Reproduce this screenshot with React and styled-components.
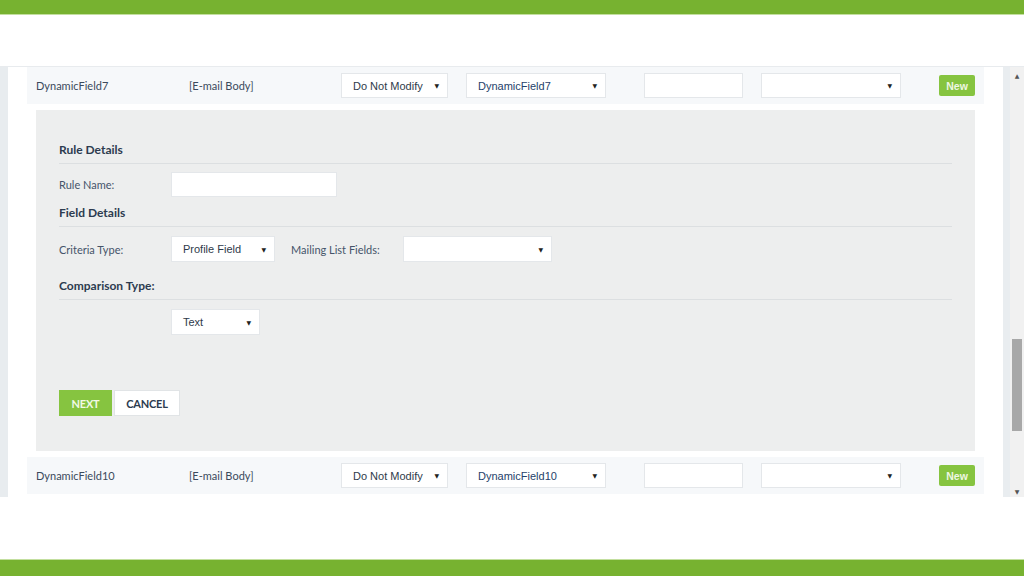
import styled, { createGlobalStyle } from "styled-components";

const GlobalStyle = createGlobalStyle`
  html, body {
    margin: 0;
    padding: 0;
    background: #ffffff;
    font-family: Lato, "Open Sans", sans-serif;
  }
  * { box-sizing: border-box; }
`;

const Page = styled.div`
  width: 1024px;
  height: 576px;
  display: flex;
  flex-direction: column;
  overflow: hidden;
`;

const GreenBar = styled.div`
  background: #77b230;
  height: ${(p) => p.$h}px;
  flex: none;
  border-${(p) => p.$edge}: 1px solid #c3df9f;
`;

const Gap = styled.div`
  height: ${(p) => p.$h}px;
  flex: none;
  border-bottom: ${(p) => (p.$line ? "1px solid #e8ebee" : "none")};
`;

const Viewport = styled.div`
  height: 430px;
  flex: none;
  display: flex;
`;

const Strip = styled.div`
  width: 8px;
  background: #e8ecef;
`;

const Scroller = styled.div`
  flex: 1;
  overflow: hidden;
  padding: 0 19px;
  background: #ffffff;
`;

const ScrollBar = styled.div`
  width: 21px;
  background: #e9edf0;
  padding-left: 7px;
  display: flex;
`;

const Track = styled.div`
  flex: 1;
  background: #f1f1f1;
  display: flex;
  flex-direction: column;
  align-items: center;
  justify-content: space-between;
  padding: 5px 0 2px;
  position: relative;
  font-size: 6px;
  color: #555;
  font-family: "DejaVu Sans", sans-serif;
`;

const Thumb = styled.div`
  position: absolute;
  left: 2px;
  right: 2px;
  top: 272px;
  height: 92px;
  background: #a8a8a8;
`;

const Row = styled.div`
  height: 37px;
  background: #f6f8fa;
  display: grid;
  grid-template-columns: 153px 152px 125px 178px 117px 178px 36px;
  align-items: center;
  padding-left: 9px;
  margin-top: ${(p) => p.$mt || 0}px;
  font-size: 11px;
  color: #3b4a5c;
`;

const Cell = styled.span`
  white-space: nowrap;
`;

const SelectBox = styled.div`
  width: ${(p) => p.$w}px;
  height: ${(p) => p.$h || 25}px;
  background: #ffffff;
  border: 1px solid #e4e7ea;
  display: flex;
  align-items: center;
  justify-content: space-between;
  padding: 0 8px 0 11px;
  font-family: "Liberation Sans", Arial, sans-serif;
  font-size: 11px;
  color: ${(p) => p.$color || "#2e3a4a"};
  flex: none;
`;

const Caret = styled.span`
  font-size: 6px;
  color: #222;
  font-family: "DejaVu Sans", sans-serif;
`;

const TextBox = styled.div`
  width: ${(p) => p.$w}px;
  height: 25px;
  background: #ffffff;
  border: 1px solid #e4e7ea;
  flex: none;
`;

const NewButton = styled.button`
  width: 36px;
  height: 21px;
  border: none;
  border-radius: 2px;
  background: #86c440;
  color: #eef7e2;
  font-family: "Liberation Sans", Arial, sans-serif;
  font-weight: bold;
  font-size: 10.5px;
  padding: 0;
`;

const Panel = styled.div`
  margin: 6px 9px 0;
  height: 341px;
  background: #edeeee;
  padding: 32px 23px 0;
  display: flex;
  flex-direction: column;
`;

const Heading = styled.div`
  font-size: 12px;
  font-weight: bold;
  color: #2c3b4f;
  line-height: 16px;
  padding-bottom: 5px;
  border-bottom: 1px solid #dcdfe1;
  margin-top: ${(p) => p.$mt || 0}px;
`;

const FieldRow = styled.div`
  display: flex;
  align-items: center;
  margin-top: ${(p) => p.$mt || 9}px;
`;

const Label = styled.span`
  width: 112px;
  flex: none;
  font-size: 11px;
  color: #45546a;
  margin-left: ${(p) => p.$ml || 0}px;
`;

const Spacer = styled.div`
  width: 112px;
  flex: none;
`;

const Actions = styled.div`
  display: flex;
  gap: 2px;
  margin-top: 55px;
`;

const ActionButton = styled.button`
  height: 26px;
  width: ${(p) => p.$w}px;
  padding: 0;
  font-family: Lato, sans-serif;
  font-weight: bold;
  font-size: 11px;
  letter-spacing: -0.2px;
  background: ${(p) => (p.$primary ? "#86c440" : "#ffffff")};
  color: ${(p) => (p.$primary ? "#f2f9e6" : "#2c3b4f")};
  border: 1px solid ${(p) => (p.$primary ? "#86c440" : "#e1e4e6")};
`;

function FieldRowLine({ name, mt }) {
  return (
    <Row $mt={mt}>
      <Cell>{name}</Cell>
      <Cell>[E-mail Body]</Cell>
      <SelectBox $w={107}>
        Do Not Modify <Caret>▼</Caret>
      </SelectBox>
      <SelectBox $w={140} $color="#253f6a">
        {name} <Caret>▼</Caret>
      </SelectBox>
      <TextBox $w={99} />
      <SelectBox $w={140}>
        <span /> <Caret>▼</Caret>
      </SelectBox>
      <NewButton>New</NewButton>
    </Row>
  );
}

export default function App() {
  return (
    <Page>
      <GlobalStyle />
      <GreenBar $h={15} $edge="bottom" />
      <Gap $h={52} $line />
      <Viewport>
        <Strip />
        <Scroller>
          <FieldRowLine name="DynamicField7" />
          <Panel>
            <Heading>Rule Details</Heading>
            <FieldRow $mt={8}>
              <Label>Rule Name:</Label>
              <TextBox $w={166} />
            </FieldRow>
            <Heading $mt={8}>Field Details</Heading>
            <FieldRow $mt={9}>
              <Label>Criteria Type:</Label>
              <SelectBox $w={104} $h={26}>
                Profile Field <Caret>▼</Caret>
              </SelectBox>
              <Label $ml={16}>Mailing List Fields:</Label>
              <SelectBox $w={149} $h={26}>
                <span /> <Caret>▼</Caret>
              </SelectBox>
            </FieldRow>
            <Heading $mt={16}>Comparison Type:</Heading>
            <FieldRow $mt={9}>
              <Spacer />
              <SelectBox $w={89} $h={26}>
                Text <Caret>▼</Caret>
              </SelectBox>
            </FieldRow>
            <Actions>
              <ActionButton $primary $w={53}>NEXT</ActionButton>
              <ActionButton $w={66}>CANCEL</ActionButton>
            </Actions>
          </Panel>
          <FieldRowLine name="DynamicField10" mt={6} />
        </Scroller>
        <ScrollBar>
          <Track>
            <span>▲</span>
            <Thumb />
            <span>▼</span>
          </Track>
        </ScrollBar>
      </Viewport>
      <Gap $h={62} />
      <GreenBar $h={17} $edge="top" />
    </Page>
  );
}
